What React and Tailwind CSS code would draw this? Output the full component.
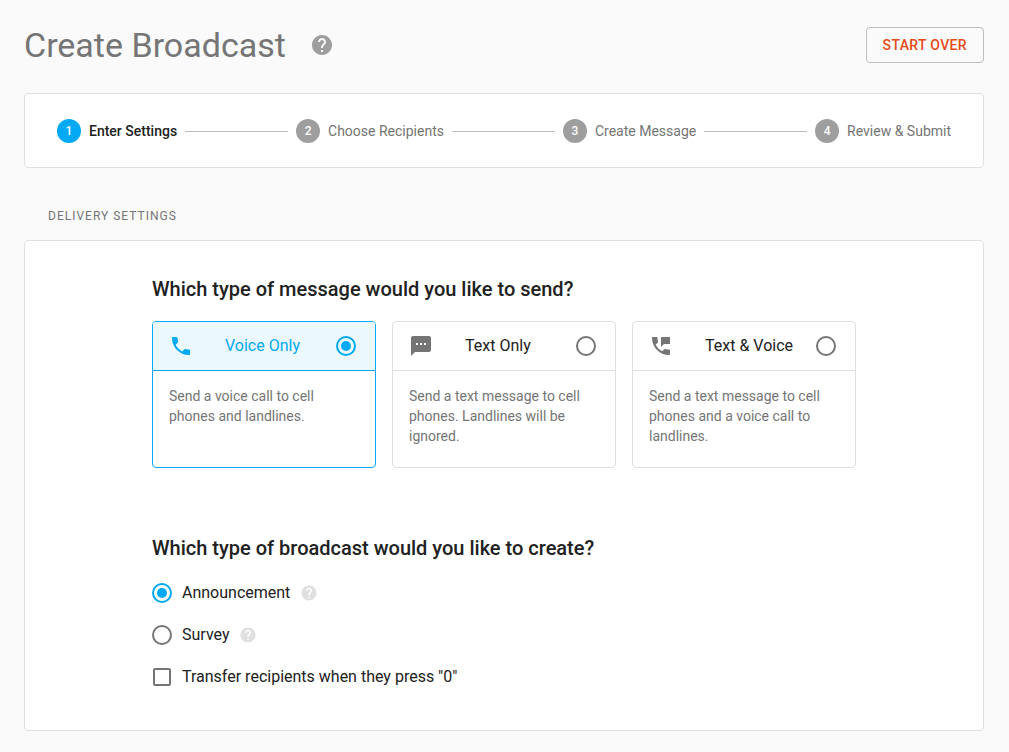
import React, { useState } from "react";
import { MdHelp, MdPermPhoneMsg, MdPhone, MdTextsms } from "react-icons/md";

const steps = ["Enter Settings", "Choose Recipients", "Create Message", "Review & Submit"];

const messageTypes = [
	{
		id: "voice",
		label: "Voice Only",
		icon: MdPhone,
		description: "Send a voice call to cell phones and landlines.",
	},
	{
		id: "text",
		label: "Text Only",
		icon: MdTextsms,
		description: "Send a text message to cell phones. Landlines will be ignored.",
	},
	{
		id: "both",
		label: "Text & Voice",
		icon: MdPermPhoneMsg,
		description: "Send a text message to cell phones and a voice call to landlines.",
	},
];

const broadcastTypes = [
	{ id: "announcement", label: "Announcement" },
	{ id: "survey", label: "Survey" },
];

const Radio = (props) => (
	<input
		type="radio"
		className="grid size-5 shrink-0 appearance-none place-content-center rounded-full border-2 border-[#757575] before:size-2.5 before:rounded-full checked:border-[#03a9f4] checked:before:bg-[#03a9f4]"
		{...props}
	/>
);

const Stepper = ({ current }) => (
	<ol className="flex items-center gap-2 rounded-sm border border-[#e0e0e0] bg-white px-8 pt-[25px] pb-6 text-sm">
		{steps.map((step, index) => (
			<React.Fragment key={step}>
				{index > 0 && <li aria-hidden="true" className="h-px flex-1 bg-[#bdbdbd]" />}
				<li
					className={
						index === current
							? "flex items-center gap-2 font-medium text-[#212121]"
							: "flex items-center gap-2 text-[#757575]"
					}
				>
					<span
						className={
							index === current
								? "flex size-6 items-center justify-center rounded-full bg-[#03a9f4] text-xs font-medium text-white"
								: "flex size-6 items-center justify-center rounded-full bg-[#9e9e9e] text-xs font-medium text-white"
						}
					>
						{index + 1}
					</span>
					{step}
				</li>
			</React.Fragment>
		))}
	</ol>
);

const MessageCard = ({ type, selected, onSelect }) => {
	const Icon = type.icon;
	return (
		<label
			className={
				selected
					? "flex flex-1 flex-col overflow-hidden rounded-sm border border-[#03a9f4]"
					: "flex flex-1 flex-col overflow-hidden rounded-sm border border-[#e0e0e0]"
			}
		>
			<span
				className={
					selected
						? "flex items-center border-b border-[#03a9f4] bg-[#ebf8fe] py-3 pr-[19px] pl-4 text-[#03a9f4]"
						: "flex items-center border-b border-[#e0e0e0] py-3 pr-[19px] pl-4 text-[#212121]"
				}
			>
				<Icon className={selected ? "size-6" : "size-6 text-[#757575]"} />
				<span className="ml-8 flex-1 text-base">{type.label}</span>
				<Radio name="messageType" checked={selected} onChange={onSelect} />
			</span>
			<span className="px-4 pt-[15px] pb-[21px] text-sm text-[#757575]">
				{type.description}
			</span>
		</label>
	);
};

const App = () => {
	const [messageType, setMessageType] = useState("voice");
	const [broadcastType, setBroadcastType] = useState("announcement");
	const [transfer, setTransfer] = useState(false);

	return (
		<main className="min-h-screen bg-[#fafafa] pt-[27px] pr-[25px] pb-5 pl-6 font-[Roboto,sans-serif] text-[#212121]">
			<header className="mb-[30px] flex items-center">
				<h1 className="text-[34px] leading-9 text-[#757575]">Create Broadcast</h1>
				<button type="button" aria-label="Help" className="ml-6 text-[#9e9e9e]">
					<MdHelp className="size-6" />
				</button>
				<button
					type="button"
					className="ml-auto h-9 rounded-sm border border-[#bdbdbd] px-4 text-sm font-medium tracking-wide text-[#e64a19] uppercase"
				>
					Start Over
				</button>
			</header>

			<Stepper current={0} />

			<h2 className="mt-10 mb-4 ml-6 text-xs tracking-[1px] text-[#757575] uppercase">
				Delivery Settings
			</h2>

			<form className="rounded-sm border border-[#e0e0e0] bg-white px-6 pt-[34px] pb-[41px]">
				<div className="mx-auto max-w-[704px]">
					<fieldset>
						<legend className="text-xl font-medium">
							Which type of message would you like to send?
						</legend>
						<div className="mt-[18px] flex gap-4">
							{messageTypes.map((type) => (
								<MessageCard
									key={type.id}
									type={type}
									selected={messageType === type.id}
									onSelect={() => setMessageType(type.id)}
								/>
							))}
						</div>
					</fieldset>

					<fieldset className="mt-[66px]">
						<legend className="text-xl font-medium">
							Which type of broadcast would you like to create?
						</legend>
						<div className="mt-[19px] flex flex-col gap-[18px]">
							{broadcastTypes.map((type) => (
								<div key={type.id} className="flex items-center gap-2.5">
									<label className="flex items-center gap-2.5">
										<Radio
											name="broadcastType"
											checked={broadcastType === type.id}
											onChange={() => setBroadcastType(type.id)}
										/>
										{type.label}
									</label>
									<button
										type="button"
										aria-label={`About ${type.label}`}
										className="text-[#e0e0e0]"
									>
										<MdHelp className="size-[18px]" />
									</button>
								</div>
							))}
							<label className="flex items-center gap-2.5">
								<span className="flex size-5 items-center justify-center">
									<input
										type="checkbox"
										className="size-[18px] appearance-none rounded-xs border-2 border-[#757575] checked:border-[#03a9f4] checked:bg-[#03a9f4]"
										checked={transfer}
										onChange={(e) => setTransfer(e.target.checked)}
									/>
								</span>
								Transfer recipients when they press "0"
							</label>
						</div>
					</fieldset>
				</div>
			</form>
		</main>
	);
};

export default App;
